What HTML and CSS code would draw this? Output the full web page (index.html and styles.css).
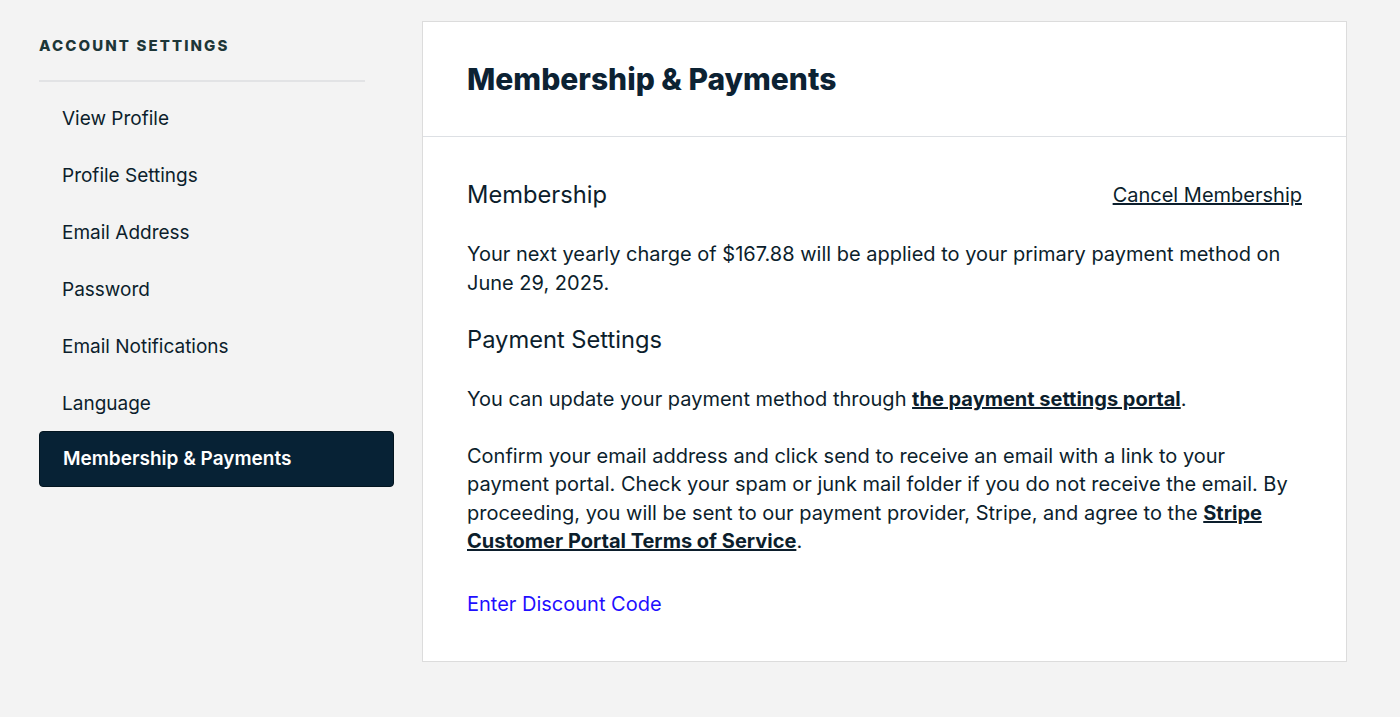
FILE: index.html
```html
<!DOCTYPE html>
<html lang="en">
  <head>
    <meta charset="utf-8">
    <title>Membership &amp; Payments</title>
    <link rel="stylesheet" href="styles.css">
  </head>

  <body>
    <div class="page">
      <aside class="sidebar">
        <h3 class="sidebar-title">Account Settings</h3>
        <nav class="nav">
          <a class="nav-item" href="#">View Profile</a>
          <a class="nav-item" href="#">Profile Settings</a>
          <a class="nav-item" href="#">Email Address</a>
          <a class="nav-item" href="#">Password</a>
          <a class="nav-item" href="#">Email Notifications</a>
          <a class="nav-item" href="#">Language</a>
          <a class="nav-item active" href="#">Membership &amp; Payments</a>
        </nav>
      </aside>

      <main class="panel">
        <div class="panel-header">
          <h1>Membership &amp; Payments</h1>
        </div>
        <div class="panel-body">
          <div class="row">
            <h2>Membership</h2>
            <a class="plain-link" href="#">Cancel Membership</a>
          </div>
          <p>Your next yearly charge of $167.88 will be applied to your primary payment method on June 29, 2025.</p>

          <h2 class="sub">Payment Settings</h2>
          <p>You can update your payment method through <a class="strong-link" href="#">the payment settings portal</a>.</p>
          <p class="gap">Confirm your email address and click send to receive an email with a link to your payment portal. Check your spam or junk mail folder if you do not receive the email. By proceeding, you will be sent to our payment provider, Stripe, and agree to the <a class="strong-link" href="#">Stripe Customer Portal Terms of Service</a>.</p>

          <a class="discount" href="#">Enter Discount Code</a>
        </div>
      </main>
    </div>
  </body>
</html>
```

FILE: styles.css
```css
html, body {
  margin: 0;
  padding: 0;
}

body {
  background: #f3f3f3;
  font-family: "Inter", "Noto Sans", sans-serif;
  color: #0c1e2c;
}

.page {
  display: flex;
  align-items: flex-start;
  padding: 21px 0 0 39px;
}

.sidebar {
  width: 355px;
  flex: none;
}

.sidebar-title {
  margin: 15px 0 0;
  width: 326px;
  padding-bottom: 25px;
  border-bottom: 2px solid #e2e3e5;
  font-size: 15px;
  font-weight: 800;
  letter-spacing: 2.1px;
  text-transform: uppercase;
  color: #1d3638;
}

.nav {
  display: flex;
  flex-direction: column;
  padding-top: 8px;
}

.nav-item {
  display: block;
  height: 57px;
  line-height: 57px;
  padding-left: 23px;
  font-size: 19px;
  color: #0c1e2c;
  text-decoration: none;
  border-radius: 4px;
}

.nav-item.active {
  margin-top: -1px;
  height: 54px;
  line-height: 54px;
  background: #072235;
  border: 1px solid #031520;
  color: #fff;
  font-weight: 600;
}

.panel {
  margin-left: 28px;
  width: 923px;
  background: #fff;
  border: 1px solid #dcdcdc;
}

.panel-header {
  height: 114px;
  padding: 0 44px;
  border-bottom: 1px solid #dde0e4;
  display: flex;
  align-items: center;
}

.panel-header h1 {
  margin: 0;
  font-size: 30px;
  font-weight: 800;
  color: #0c2233;
}

.panel-body {
  padding: 40px 44px 45px;
}

.row {
  display: flex;
  justify-content: space-between;
  align-items: center;
}

h2 {
  margin: 0;
  font-size: 23.7px;
  font-weight: 400;
  color: #0c1e2c;
  line-height: 36px;
}

h2.sub {
  margin-top: 25px;
}

.plain-link {
  font-size: 20px;
  color: #0c1e2c;
  text-decoration: underline;
}

p {
  margin: 27px 0 0;
  font-size: 20px;
  line-height: 28.5px;
}

p.gap {
  margin-top: 28px;
}

.strong-link {
  color: #0c1e2c;
  font-weight: 700;
  text-decoration: underline;
}

.discount {
  display: inline-block;
  margin-top: 36px;
  font-size: 20px;
  color: #1f0fff;
  text-decoration: none;
}
```
